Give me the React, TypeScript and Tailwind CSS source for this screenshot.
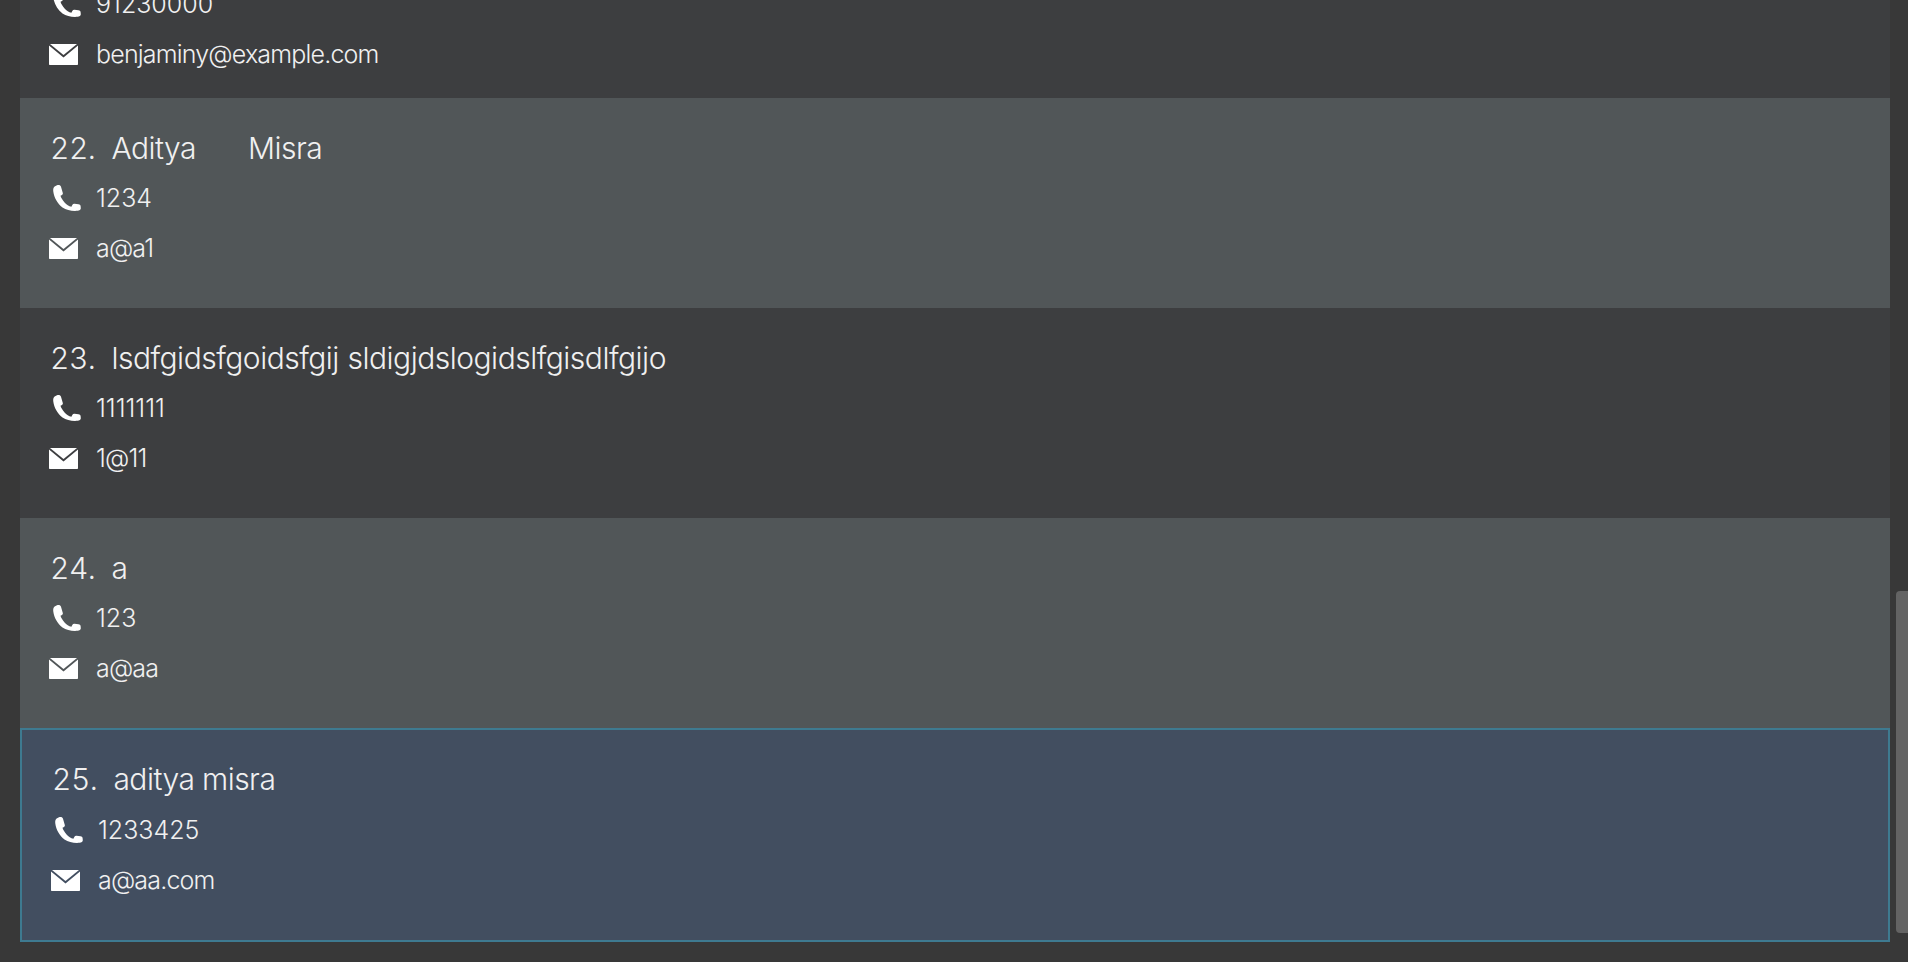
const people = [
  { id: 22, name: 'Aditya      Misra', phone: '1234', email: 'a@a1' },
  { id: 23, name: 'lsdfgidsfgoidsfgij sldigjdslogidslfgisdlfgijo', phone: '1111111', email: '1@11' },
  { id: 24, name: 'a', phone: '123', email: 'a@aa' },
];

function PhoneIcon() {
  return (
    <svg width="28" height="26" viewBox="0 0 28 26" fill="white" className="shrink-0">
      <path d="M4 0.3 L1.6 1.5 C0.4 2.5 0 4 0.3 6.5 C1 12.5 4.5 18.5 9.5 22.5 C13.5 25.3 19 26.2 24.5 25.8 C26.5 25.6 27.8 24.8 27.8 23.3 L27.6 21 C27.4 19.8 26.7 19.3 25.5 19.2 L21.5 18.8 C20.5 18.7 19.8 19.1 19.3 20 L18.4 21.8 C13.5 20.7 8.8 15 7.5 10.8 L9 10 C9.8 9.5 10 8.8 9.8 8 L8 1.8 C7.6 0.4 6 -0.3 4 0.3 Z" />
    </svg>
  );
}

function MailIcon() {
  return (
    <svg width="29" height="21" viewBox="0 0 29 21" fill="white" className="shrink-0">
      <path d="M1 0 H28 L14.5 11 Z" />
      <path d="M0 1.5 V20 C0 20.6 0.4 21 1 21 H28 C28.6 21 29 20.6 29 20 V1.5 L14.5 13.5 Z" />
    </svg>
  );
}

function ContactLines({ phone, email }: { phone: string; email: string }) {
  return (
    <>
      <div className="flex items-center h-[50px] pl-[4px] gap-[15px]">
        <PhoneIcon />
        <span className="relative top-px tracking-[0px]">{phone}</span>
      </div>
      <div className="flex items-center h-[50px] gap-[18px]">
        <MailIcon />
        <span className="relative top-px tracking-[-0.82px]">{email}</span>
      </div>
    </>
  );
}

function Person({ id, name, phone, email, odd }: { id: number; name: string; phone: string; email: string; odd: boolean }) {
  return (
    <div className={`h-[210px] pl-[29px] pt-[25px] ${odd ? 'bg-[#3d3e40]' : 'bg-[#515658]'}`}>
      <div className="flex h-[50px] items-center gap-[16px] pl-px text-[30px] tabular-nums tracking-[-0.5px] whitespace-pre [word-spacing:1.1px]">
        <span>{id}.</span>
        <span>{name}</span>
      </div>
      <ContactLines phone={phone} email={email} />
    </div>
  );
}

export default function App() {
  return (
    <div className="relative h-[962px] overflow-hidden bg-[#383838] text-[#f0f0f0] text-[25px] tracking-[-0.5px] font-light font-['Inter',sans-serif]">
      <div className="w-[1870px] ml-[20px] mt-[-21px]">
        {/* Row 21, scrolled mostly out of view */}
        <div className="h-[119px] pl-[29px] bg-[#3d3e40]">
          <ContactLines phone="91230000" email="benjaminy@example.com" />
        </div>
        {people.map((p) => (
          <Person key={p.id} {...p} odd={p.id % 2 === 1} />
        ))}
        <div className="h-[214px] border-2 border-[#3e7a90] bg-[#424e60] pl-[29px] pt-[24px]">
          <div className="flex h-[50px] items-center gap-[16px] pl-px text-[30px] tabular-nums tracking-[-0.5px]">
            <span>25.</span>
            <span>aditya misra</span>
          </div>
          <div className="pt-px">
            <ContactLines phone="1233425" email="a@aa.com" />
          </div>
        </div>
      </div>
      {/* Scrollbar thumb */}
      <div className="absolute left-[1896px] top-[591px] h-[342px] w-[12px] rounded-l-[4px] bg-[#636363]" />
    </div>
  );
}
